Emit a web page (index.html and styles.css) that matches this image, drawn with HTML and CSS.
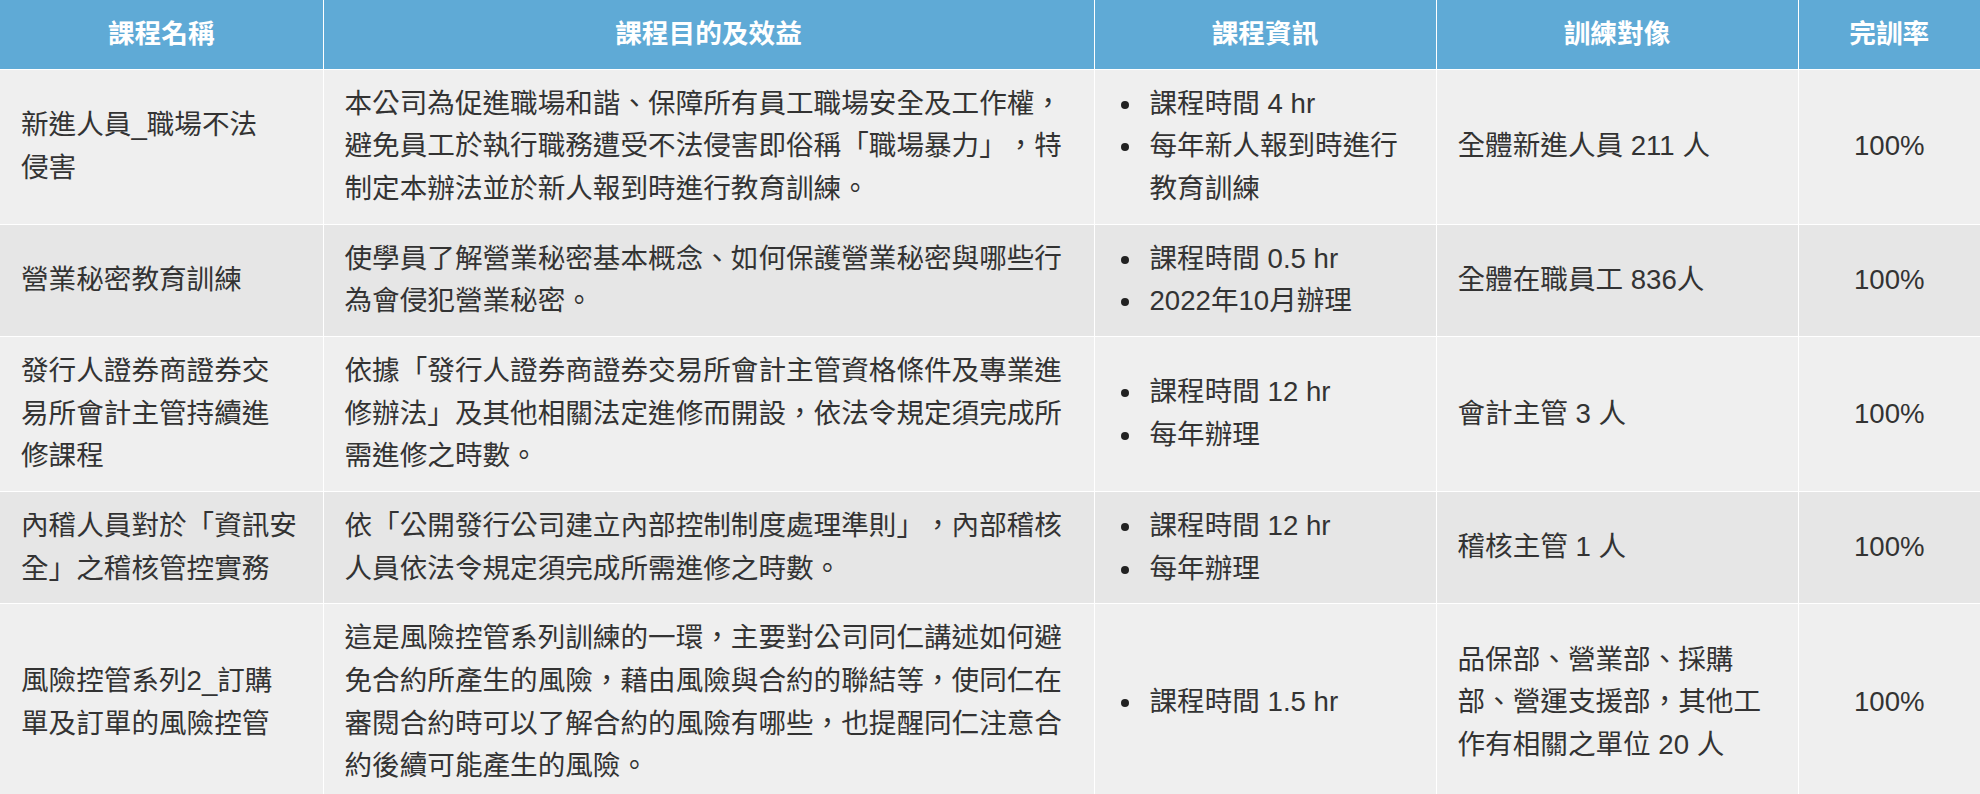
FILE: index.html
```html
<!DOCTYPE html>
<html lang="zh-Hant">
<head>
<meta charset="utf-8">
<title>課程</title>
<link rel="stylesheet" href="styles.css">
</head>
<body>
<table class="course-table">
  <colgroup>
    <col class="c-name">
    <col class="c-goal">
    <col class="c-info">
    <col class="c-target">
    <col class="c-rate">
  </colgroup>
  <thead>
    <tr>
      <th>課程名稱</th>
      <th>課程目的及效益</th>
      <th>課程資訊</th>
      <th>訓練對像</th>
      <th>完訓率</th>
    </tr>
  </thead>
  <tbody>
    <tr class="odd">
      <td>新進人員_職場不法<br>侵害</td>
      <td>本公司為促進職場和諧、保障所有員工職場安全及工作權，<br>避免員工於執行職務遭受不法侵害即俗稱「職場暴力」，特<br>制定本辦法並於新人報到時進行教育訓練。</td>
      <td class="info">
        <ul>
          <li><span>課程時間 4 hr</span></li>
          <li><span>每年新人報到時進行<br>教育訓練</span></li>
        </ul>
      </td>
      <td>全體新進人員 211 人</td>
      <td class="rate">100%</td>
    </tr>
    <tr class="even">
      <td>營業秘密教育訓練</td>
      <td>使學員了解營業秘密基本概念、如何保護營業秘密與哪些行<br>為會侵犯營業秘密。</td>
      <td class="info">
        <ul>
          <li><span>課程時間 0.5 hr</span></li>
          <li><span>2022年10月辦理</span></li>
        </ul>
      </td>
      <td>全體在職員工 836人</td>
      <td class="rate">100%</td>
    </tr>
    <tr class="odd">
      <td>發行人證券商證券交<br>易所會計主管持續進<br>修課程</td>
      <td>依據「發行人證券商證券交易所會計主管資格條件及專業進<br>修辦法」及其他相關法定進修而開設，依法令規定須完成所<br>需進修之時數。</td>
      <td class="info">
        <ul>
          <li><span>課程時間 12 hr</span></li>
          <li><span>每年辦理</span></li>
        </ul>
      </td>
      <td>會計主管 3 人</td>
      <td class="rate">100%</td>
    </tr>
    <tr class="even">
      <td>內稽人員對於「資訊安<br>全」之稽核管控實務</td>
      <td>依「公開發行公司建立內部控制制度處理準則」，內部稽核<br>人員依法令規定須完成所需進修之時數。</td>
      <td class="info">
        <ul>
          <li><span>課程時間 12 hr</span></li>
          <li><span>每年辦理</span></li>
        </ul>
      </td>
      <td>稽核主管 1 人</td>
      <td class="rate">100%</td>
    </tr>
    <tr class="odd">
      <td>風險控管系列2_訂購<br>單及訂單的風險控管</td>
      <td>這是風險控管系列訓練的一環，主要對公司同仁講述如何避<br>免合約所產生的風險，藉由風險與合約的聯結等，使同仁在<br>審閱合約時可以了解合約的風險有哪些，也提醒同仁注意合<br>約後續可能產生的風險。</td>
      <td class="info">
        <ul>
          <li><span>課程時間 1.5 hr</span></li>
        </ul>
      </td>
      <td>品保部、營業部、採購<br>部、營運支援部，其他工<br>作有相關之單位 20 人</td>
      <td class="rate">100%</td>
    </tr>
  </tbody>
</table>
</body>
</html>
```

FILE: styles.css
```css
html, body {
  margin: 0;
  padding: 0;
  background: #ffffff;
}

body {
  font-family: "Liberation Sans", "Noto Sans CJK TC", sans-serif;
  color: #333333;
  text-spacing-trim: space-all;
}

.course-table {
  width: 1980px;
  table-layout: fixed;
  border-collapse: collapse;
  line-height: 42.67px;
}

.c-name { width: 323px; }
.c-goal { width: 771px; }
.c-info { width: 342px; }
.c-target { width: 362px; }
.c-rate { width: 182px; }

.course-table th,
.course-table td {
  border: 1.5px solid #ffffff;
  padding: 13px 21px;
  vertical-align: middle;
  white-space: nowrap;
  overflow: hidden;
}

.course-table thead th {
  background: #5faad6;
  color: #ffffff;
  font-size: 26.67px;
  font-weight: 700;
  text-align: center;
  border-top: 0;
}

.course-table td {
  font-size: 27.6px;
  text-align: left;
}

.course-table th:first-child,
.course-table td:first-child {
  border-left: 0;
}

.course-table th:last-child,
.course-table td:last-child {
  border-right: 0;
}

.odd td {
  background: #efefef;
}

.even td {
  background: #e6e6e6;
}

.course-table td.rate {
  text-align: center;
}

.info ul {
  margin: 0;
  padding: 0 0 0 5px;
  list-style: none;
}

.info li {
  display: flex;
  align-items: flex-start;
}

.info li::before {
  content: "";
  flex: none;
  width: 8px;
  height: 8px;
  border-radius: 50%;
  background: #222222;
  margin: 18px 21px 0 0;
}
```
